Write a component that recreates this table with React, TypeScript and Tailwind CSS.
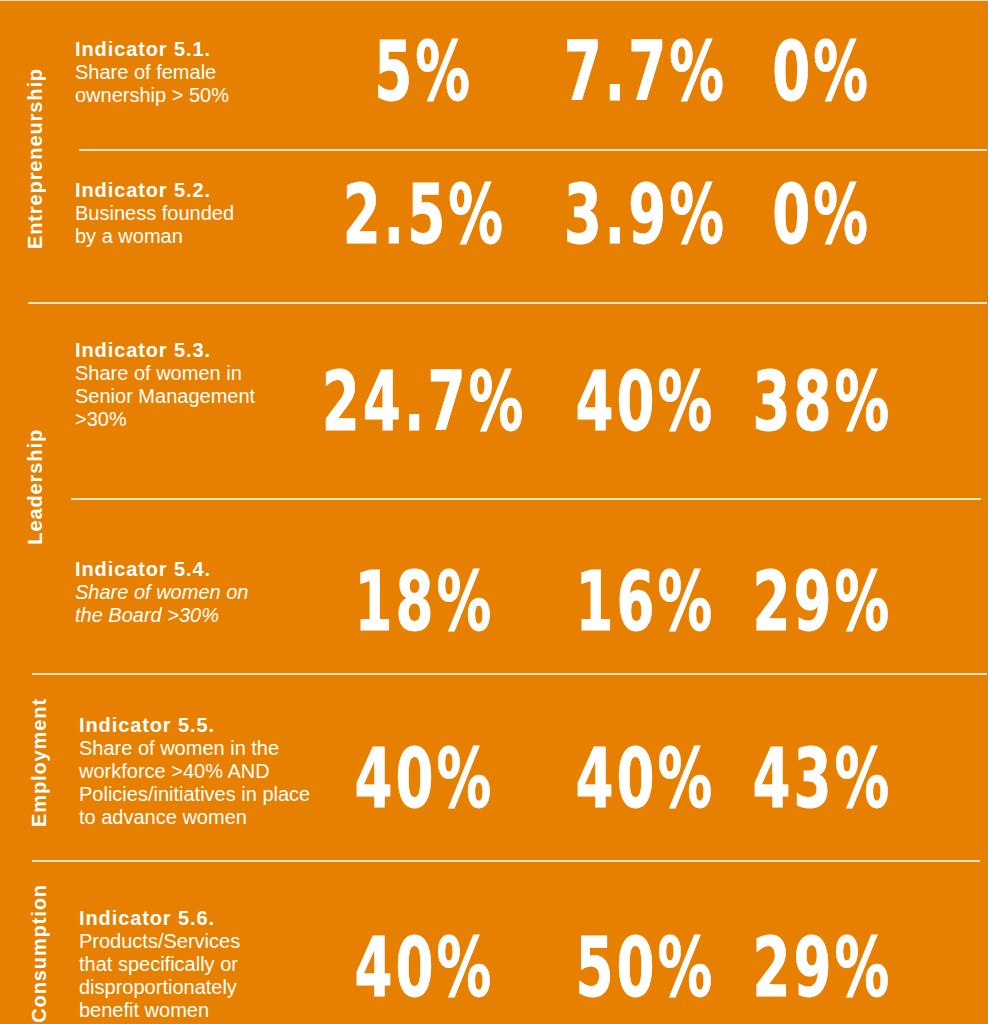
import React from "react";

type RowData = {
  h: string;
  tpt: string;
  npt: string;
  pl: string;
  title: string;
  lines: string[];
  italic?: boolean;
  nums: [string, string, string];
};

const NUM =
  "font-['DejaVu_Sans_Condensed','DejaVu_Sans',sans-serif] font-bold text-[82px] leading-none whitespace-nowrap";

function Num({ v, cls }: { v: string; cls: string }) {
  return (
    <div className={`${cls} flex justify-center ${NUM}`}>
      <span className="inline-block scale-x-[0.74] tracking-[4px] [-webkit-text-stroke:0.8px_#ffffff]">{v}</span>
    </div>
  );
}

function Row({ r }: { r: RowData }) {
  return (
    <div className={`flex ${r.h}`}>
      <div className={`w-[253px] shrink-0 ${r.pl} ${r.tpt} text-[20px] leading-[23px] whitespace-nowrap`}>
        <div className="font-bold tracking-[0.9px]">{r.title}</div>
        {r.lines.map((l) => (
          <div key={l} className={r.italic ? "italic" : ""}>
            {l}
          </div>
        ))}
      </div>
      <div className={`flex ${r.npt}`}>
        <Num v={r.nums[0]} cls="w-[200px]" />
        <Num v={r.nums[1]} cls="ml-[21px] w-[200px]" />
        <Num v={r.nums[2]} cls="w-[154px]" />
      </div>
    </div>
  );
}

function Label({ text }: { text: string }) {
  return (
    <span className="[writing-mode:vertical-rl] rotate-180 text-[20px] leading-[20px] font-bold tracking-[0.9px] whitespace-nowrap">
      {text}
    </span>
  );
}

const r1: RowData = {
  h: "h-[148px]",
  tpt: "pt-[37px]",
  npt: "pt-[30px]",
  pl: "pl-[4px]",
  title: "Indicator 5.1.",
  lines: ["Share of female", "ownership > 50%"],
  nums: ["5%", "7.7%", "0%"],
};
const r2: RowData = {
  h: "h-[151px]",
  tpt: "pt-[28px]",
  npt: "pt-[23px]",
  pl: "pl-[4px]",
  title: "Indicator 5.2.",
  lines: ["Business founded", "by a woman"],
  nums: ["2.5%", "3.9%", "0%"],
};
const r3: RowData = {
  h: "h-[194px]",
  tpt: "pt-[35px]",
  npt: "pt-[57px]",
  pl: "pl-[4px]",
  title: "Indicator 5.3.",
  lines: ["Share of women in", "Senior Management", ">30%"],
  nums: ["24.7%", "40%", "38%"],
};
const r4: RowData = {
  h: "h-[173px]",
  tpt: "pt-[58px]",
  npt: "pt-[61px]",
  pl: "pl-[4px]",
  title: "Indicator 5.4.",
  lines: ["Share of women on", "the Board >30%"],
  italic: true,
  nums: ["18%", "16%", "29%"],
};
const r5: RowData = {
  h: "h-[185px]",
  tpt: "pt-[39px]",
  npt: "pt-[63px]",
  pl: "pl-[8px]",
  title: "Indicator 5.5.",
  lines: ["Share of women in the", "workforce >40% AND", "Policies/initiatives in place", "to advance women"],
  nums: ["40%", "40%", "43%"],
};
const r6: RowData = {
  h: "h-[162px]",
  tpt: "pt-[45px]",
  npt: "pt-[65px]",
  pl: "pl-[8px]",
  title: "Indicator 5.6.",
  lines: ["Products/Services", "that specifically or", "disproportionately", "benefit women"],
  nums: ["40%", "50%", "29%"],
};

export default function App() {
  return (
    <div className="w-[988px] h-[1024px] overflow-hidden bg-[#e77f00] text-white font-['Liberation_Sans',Arial,sans-serif]">
      <div className="h-px bg-[#f4d9bb]" />

      {/* Entrepreneurship */}
      <section className="flex h-[301px]">
        <div className="w-[71px] shrink-0 flex flex-col items-start justify-center pl-[25px] pt-[14px]">
          <Label text="Entrepreneurship" />
        </div>
        <div className="flex-1 flex flex-col">
          <Row r={r1} />
          <div className="h-[2px] ml-[8px] mr-[1px] bg-[#fbe6cf]" />
          <Row r={r2} />
        </div>
      </section>
      <div className="h-[2px] ml-[28px] mr-[1px] bg-[#fbe6cf]" />

      {/* Leadership */}
      <section className="flex h-[369px]">
        <div className="w-[71px] shrink-0 flex flex-col items-start justify-center pl-[25px] pb-[4px]">
          <Label text="Leadership" />
        </div>
        <div className="flex-1 flex flex-col">
          <Row r={r3} />
          <div className="h-[2px] mr-[7px] bg-[#fbe6cf]" />
          <Row r={r4} />
        </div>
      </section>
      <div className="h-[2px] ml-[32px] mr-[1px] bg-[#fbe6cf]" />

      {/* Employment */}
      <section className="flex h-[185px]">
        <div className="w-[71px] shrink-0 flex flex-col items-start justify-center pl-[29px] pb-[10px]">
          <Label text="Employment" />
        </div>
        <div className="flex-1 flex flex-col">
          <Row r={r5} />
        </div>
      </section>
      <div className="h-[2px] ml-[32px] mr-[8px] bg-[#fbe6cf]" />

      {/* Consumption */}
      <section className="flex h-[162px]">
        <div className="w-[71px] shrink-0 flex flex-col items-start justify-start pl-[29px] pt-[22px]">
          <Label text="Consumption" />
        </div>
        <div className="flex-1 flex flex-col">
          <Row r={r6} />
        </div>
      </section>
    </div>
  );
}
